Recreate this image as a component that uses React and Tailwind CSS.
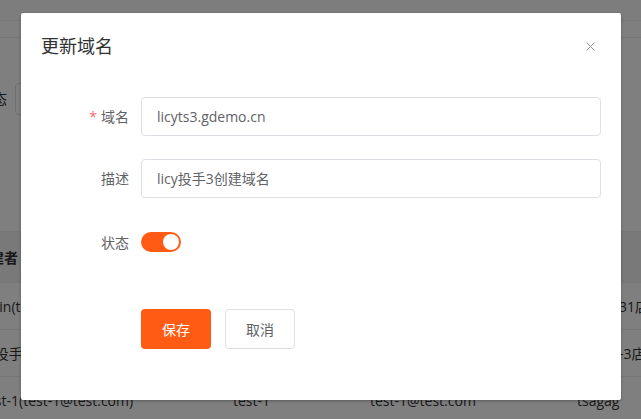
import { X } from 'lucide-react';

const font = { fontFamily: '"Open Sans", "Noto Sans CJK SC", sans-serif' };

function PageBehind() {
  const rows = [
    { first: 'admin(test@test.com)', cls: 'ml-[-30px] w-[263px]', c2: '', c3: '', c4: '测试门31店' },
    { first: 'licy投手3店', cls: 'ml-[-26px] w-[259px]', c2: '', c3: '', c4: '投手店-3店' },
    { first: 'test-1(test-1@test.com)', cls: 'ml-[-18px] w-[251px]', c2: 'test-1', c3: 'test-1@test.com', c4: 'tsagag' },
  ];
  return (
    <div className="flex flex-col text-[14px] text-[#333]">
      <div className="h-[21px] border-b border-[#ececec] bg-[#fafafa]" />
      <div className="h-[17px] border-b border-[#ececec]" />
      <div className="flex h-[146px] items-start pt-[45px]">
        <div className="ml-[-21px] flex items-center gap-2">
          <span className="leading-[32px]">状态</span>
          <div className="h-[32px] w-[200px] rounded border border-[#dcdfe6]" />
        </div>
      </div>
      <div className="h-[48px] border-b border-[#f0f0f0]" />
      <div className="flex flex-col">
        <div className="flex h-[51px] items-center border-b border-[#ebeef5] bg-[#f2f2f2] font-bold">
          <div className="ml-[-24px] w-[257px] shrink-0">创建者</div>
        </div>
        {rows.map((r, i) => (
          <div key={i} className="flex h-[47px] items-center border-b border-[#ebeef5]">
            <div className={`${r.cls} shrink-0 whitespace-nowrap`}>{r.first}</div>
            <div className="w-[137px] shrink-0 whitespace-nowrap">{r.c2}</div>
            <div className="w-[207px] shrink-0 whitespace-nowrap">{r.c3}</div>
            <div className="shrink-0 whitespace-nowrap">{r.c4}</div>
          </div>
        ))}
      </div>
    </div>
  );
}

export default function App() {
  return (
    <div className="relative h-[419px] w-[641px] overflow-hidden bg-white" style={font}>
      <PageBehind />
      <div className="absolute inset-0 bg-black/50" />
      <div className="absolute left-[21px] top-[13px] flex h-[387px] w-[600px] flex-col rounded-[2px] bg-white shadow-[0_1px_3px_rgba(0,0,0,0.3)]">
        <div className="flex items-center justify-between pl-5 pr-[23px] pt-[21px]">
          <span className="text-[18px] leading-[24px] text-[#303133]">更新域名</span>
          <X className="h-[15px] w-[15px] text-[#909399]" strokeWidth={1.5} />
        </div>
        <div className="flex flex-col px-5 pt-[39px]">
          <div className="mb-[23px] flex items-center">
            <label className="w-[100px] pr-3 text-right text-[14px] text-[#606266]">
              <span className="mr-1 text-[#f56c6c]">*</span>域名
            </label>
            <div className="flex h-[39px] flex-1 items-center rounded border border-[#dcdfe6] px-[15px] text-[14px] text-[#606266]">
              licyts3.gdemo.cn
            </div>
          </div>
          <div className="mb-[24px] flex items-center">
            <label className="w-[100px] pr-3 text-right text-[14px] text-[#606266]">描述</label>
            <div className="flex h-[39px] flex-1 items-center rounded border border-[#dcdfe6] px-[15px] text-[14px] text-[#606266]">
              licy投手3创建域名
            </div>
          </div>
          <div className="flex h-[40px] items-center">
            <label className="w-[100px] pr-3 text-right text-[14px] text-[#606266]">状态</label>
            <div className="flex h-[20px] w-[40px] items-center justify-end rounded-full bg-[#ff5b14] pr-[2px]">
              <div className="h-[16px] w-[16px] rounded-full bg-white" />
            </div>
          </div>
          <div className="mt-[47px] flex gap-[14px] pl-[100px]">
            <button className="h-[40px] w-[70px] rounded bg-[#ff5b14] text-[14px] text-white">保存</button>
            <button className="h-[40px] w-[70px] rounded border border-[#dcdfe6] bg-white text-[14px] text-[#606266]">取消</button>
          </div>
        </div>
      </div>
    </div>
  );
}
